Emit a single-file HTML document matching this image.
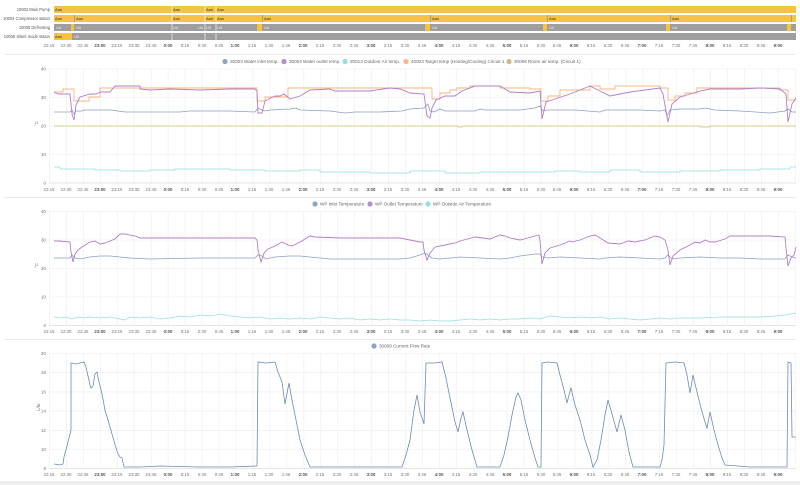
<!DOCTYPE html>
<html><head><meta charset="utf-8"><style>
html,body{margin:0;padding:0;background:#fff;width:800px;height:485px;overflow:hidden}
svg{display:block;font-family:"Liberation Sans",sans-serif}
.ax text{font-size:4.4px;fill:#777;text-anchor:middle}
.ax .b{font-weight:bold;fill:#555}
.yl{font-size:4.6px;fill:#777;text-anchor:end}
.lg{font-size:4.6px;fill:#666}
.rl{font-size:4.1px;fill:#555;text-anchor:end}
.on{font-size:4px;fill:#333}
.off{font-size:4px;fill:#eee}
</style></head><body>
<svg width="800" height="485" viewBox="0 0 800 485">
<defs>
<pattern id="vg" x="49" y="0" width="16.95" height="500" patternUnits="userSpaceOnUse"><line x1="0.5" y1="0" x2="0.5" y2="500" stroke="#ececec" stroke-width="0.6"/></pattern>
</defs>

<!-- Timeline -->
<text class="rl" x="50" y="11">10002 Main Pump</text>
<text class="rl" x="50" y="20">10004 Compressor status</text>
<text class="rl" x="50" y="29">10005 Defrosting</text>
<text class="rl" x="50" y="38">10006 Silent mode status</text>
<rect x="54" y="6" width="742" height="7" fill="#f6c244"/>
<g stroke="#fff" stroke-width="0.6"><line x1="172" y1="6" x2="172" y2="13"/><line x1="205" y1="6" x2="205" y2="13"/><line x1="216" y1="6" x2="216" y2="13"/></g>
<rect x="54" y="15" width="742" height="7" fill="#f6c244"/>
<g fill="#9e9e9e"><rect x="74" y="15" width="1" height="7"/><rect x="262" y="15" width="1" height="7"/><rect x="430" y="15" width="1" height="7"/><rect x="547" y="15" width="1" height="7"/><rect x="670" y="15" width="1" height="7"/><rect x="791" y="15" width="1" height="7"/></g>
<g stroke="#fff" stroke-width="0.6"><line x1="172" y1="15" x2="172" y2="22"/><line x1="205" y1="15" x2="205" y2="22"/><line x1="216" y1="15" x2="216" y2="22"/></g>
<rect x="54" y="24" width="742" height="7" fill="#9e9e9e"/>
<g fill="#f6c244"><rect x="71" y="24" width="3" height="7"/><rect x="257" y="24" width="5" height="7"/><rect x="425" y="24" width="5" height="7"/><rect x="543" y="24" width="4" height="7"/><rect x="666" y="24" width="4" height="7"/><rect x="787" y="24" width="4" height="7"/></g>
<g stroke="#fff" stroke-width="0.6"><line x1="172" y1="24" x2="172" y2="31"/><line x1="205" y1="24" x2="205" y2="31"/><line x1="216" y1="24" x2="216" y2="31"/></g>
<rect x="54" y="33" width="742" height="7" fill="#9e9e9e"/>
<rect x="54" y="33" width="18" height="7" fill="#f6c244"/>
<g stroke="#fff" stroke-width="0.6"><line x1="172" y1="33" x2="172" y2="40"/><line x1="205" y1="33" x2="205" y2="40"/><line x1="216" y1="33" x2="216" y2="40"/></g>
<g class="on"><text x="55" y="11">Aan</text><text x="173" y="11">Aan</text><text x="206" y="11">Aan</text><text x="217" y="11">Aan</text>
<text x="55" y="20">Aan</text><text x="76" y="20">Aan</text><text x="173" y="20">Aan</text><text x="206" y="20">Aan</text><text x="217" y="20">Aan</text><text x="264" y="20">Aan</text><text x="432" y="20">Aan</text><text x="549" y="20">Aan</text><text x="672" y="20">Aan</text>
<text x="55" y="38">Aan</text></g>
<g class="off"><text x="56" y="29">Uit</text><text x="76" y="29">Uit</text><text x="173" y="29">Uit</text><text x="198" y="29">Uit</text><text x="206" y="29">Uit</text><text x="217" y="29">Uit</text><text x="264" y="29">Uit</text><text x="432" y="29">Uit</text><text x="549" y="29">Uit</text><text x="672" y="29">Uit</text>
<text x="74" y="38">Uit</text></g>

<g class="ax" transform="translate(0,47)">
<text x="49">22:15</text><text x="66">22:30</text><text x="83">22:45</text><text class="b" x="100">23:00</text><text x="117">23:15</text><text x="134">23:30</text><text x="151">23:45</text><text class="b" x="168">0:00</text><text x="185">0:15</text><text x="202">0:30</text><text x="219">0:45</text><text class="b" x="235">1:00</text><text x="252">1:15</text><text x="269">1:30</text><text x="286">1:45</text><text class="b" x="303">2:00</text><text x="320">2:15</text><text x="337">2:30</text><text x="354">2:45</text><text class="b" x="371">3:00</text><text x="388">3:15</text><text x="405">3:30</text><text x="422">3:45</text><text class="b" x="439">4:00</text><text x="456">4:15</text><text x="473">4:30</text><text x="490">4:45</text><text class="b" x="507">5:00</text><text x="524">5:15</text><text x="541">5:30</text><text x="557">5:45</text><text class="b" x="574">6:00</text><text x="591">6:15</text><text x="608">6:30</text><text x="625">6:45</text><text class="b" x="642">7:00</text><text x="659">7:15</text><text x="676">7:30</text><text x="693">7:45</text><text class="b" x="710">8:00</text><text x="727">8:15</text><text x="744">8:30</text><text x="761">8:45</text><text class="b" x="778">9:00</text>
</g>
<line x1="4" y1="54.5" x2="796" y2="54.5" stroke="#e4e4e4" stroke-width="0.8"/>

<!-- Chart 1 -->
<g class="lg">
<circle cx="225" cy="61.5" r="2.6" fill="#8fa5c6"/><text x="230" y="63">30003 Water inlet temp.</text>
<circle cx="284" cy="61.5" r="2.6" fill="#b48fcc"/><text x="289" y="63">30004 Water outlet temp.</text>
<circle cx="345" cy="61.5" r="2.6" fill="#98dde0"/><text x="350" y="63">30013 Outdoor Air temp.</text>
<circle cx="406" cy="61.5" r="2.6" fill="#f7b98a"/><text x="411" y="63">40003 Target temp (Heating/Cooling) Circuit 1</text>
<circle cx="509" cy="61.5" r="2.6" fill="#cfbb86"/><text x="514" y="63">30008 Room air temp. (Circuit 1)</text>
</g>
<rect x="49" y="68" width="747" height="116" fill="url(#vg)"/>
<g stroke="#ececec" stroke-width="0.6"><line x1="49" y1="69" x2="796" y2="69"/><line x1="49" y1="97.5" x2="796" y2="97.5"/><line x1="49" y1="126" x2="796" y2="126"/><line x1="49" y1="154.5" x2="796" y2="154.5"/><line x1="49" y1="183" x2="796" y2="183" stroke="#ccc"/></g>
<g class="yl"><text x="46" y="70.5">40</text><text x="46" y="99">30</text><text x="46" y="127.5">20</text><text x="46" y="156">10</text><text x="46" y="184.5">0</text></g>
<text x="36" y="128" font-size="4.5" fill="#777" transform="rotate(-90 36 126)">°C</text>
<polyline fill="none" stroke="#d5bd6e" stroke-width="0.8" points="54,126 458,126 458,127 462,127 462,126 700,126 700,127 710,127 710,126 796,126"/>
<polyline fill="none" stroke="#93e0e0" stroke-width="0.8" points="54,167 60,167 60,169 95,169 95,170 120,170 120,171 150,171 150,170 175,170 175,169 230,169 230,170 265,170 265,171 300,171 300,170 320,170 320,172 370,172 370,173 410,173 410,171 445,171 445,173 480,173 480,172 555,172 555,171 580,171 580,172 610,172 610,170 640,170 640,172 680,172 680,171 720,171 720,170 760,170 760,169 790,169 790,167 796,167"/>
<polyline fill="none" stroke="#8ba0c4" stroke-width="0.8" points="54,112 70,112 72,110 74,114 76,111 82,111 85,110 112,110 118,111 125,112 180,112 190,111 230,111 255,112 258,108 262,110 265,111 270,110 290,109 296,108 300,110 330,111 345,113 355,112 370,112 380,112 402,111 410,109 424,108 428,104 430,111 434,112 440,109 445,111 475,111 480,109 485,110 520,110 535,108 540,106 543,111 548,110 560,110 575,110 600,112 605,110 640,110 660,111 665,110 667,116 670,110 680,109 700,109 705,108 715,110 740,111 770,113 785,111 788,109 792,112 796,112"/>
<polyline fill="none" stroke="#f7b484" stroke-width="0.9" points="54,92 63,92 63,89 74,89 74,101 89,101 89,97 100,97 100,88 257,88 257,101 265,101 265,97 288,97 288,88 432,88 432,99 440,99 440,93 450,93 450,90 457,90 457,88 470,88 470,86 500,86 500,88 530,88 530,89 541,89 541,101 548,101 548,96 560,96 560,90 590,90 590,86 600,86 600,89 615,89 615,86 660,86 660,88 668,88 668,100 675,100 675,96 685,96 685,93 697,93 697,88 780,88 780,90 788,90 788,100 796,100"/>
<polyline fill="none" stroke="#b07fc8" stroke-width="0.9" points="54,92 58,94 70,94 72,114 74,120 76,105 80,97 90,94 96,94 100,92 110,92 115,86 140,86 140,89 150,90 170,89 200,90 230,89 255,89 257,91 258,113 262,113 265,101 275,96 280,96 284,94 290,99 300,96 310,90 330,89 335,91 370,91 390,88 400,89 410,93 424,94 427,116 430,118 432,108 436,100 445,96 455,96 462,91 475,86 500,86 505,89 510,92 530,93 540,91 542,119 546,102 555,99 570,94 580,90 590,86 600,91 610,96 630,92 645,90 660,88 663,94 668,122 672,104 680,97 690,94 700,91 710,89 740,89 760,88 780,89 786,94 788,122 792,104 796,98"/>
<g class="ax" transform="translate(0,191)">
<text x="49">22:15</text><text x="66">22:30</text><text x="83">22:45</text><text class="b" x="100">23:00</text><text x="117">23:15</text><text x="134">23:30</text><text x="151">23:45</text><text class="b" x="168">0:00</text><text x="185">0:15</text><text x="202">0:30</text><text x="219">0:45</text><text class="b" x="235">1:00</text><text x="252">1:15</text><text x="269">1:30</text><text x="286">1:45</text><text class="b" x="303">2:00</text><text x="320">2:15</text><text x="337">2:30</text><text x="354">2:45</text><text class="b" x="371">3:00</text><text x="388">3:15</text><text x="405">3:30</text><text x="422">3:45</text><text class="b" x="439">4:00</text><text x="456">4:15</text><text x="473">4:30</text><text x="490">4:45</text><text class="b" x="507">5:00</text><text x="524">5:15</text><text x="541">5:30</text><text x="557">5:45</text><text class="b" x="574">6:00</text><text x="591">6:15</text><text x="608">6:30</text><text x="625">6:45</text><text class="b" x="642">7:00</text><text x="659">7:15</text><text x="676">7:30</text><text x="693">7:45</text><text class="b" x="710">8:00</text><text x="727">8:15</text><text x="744">8:30</text><text x="761">8:45</text><text class="b" x="778">9:00</text>
</g>
<line x1="4" y1="197.5" x2="796" y2="197.5" stroke="#e4e4e4" stroke-width="0.8"/>

<!-- Chart 2 -->
<g class="lg">
<circle cx="315" cy="204" r="2.6" fill="#8fa5c6"/><text x="320" y="205.5">WP Inlet Temperature</text>
<circle cx="370" cy="204" r="2.6" fill="#b48fcc"/><text x="375" y="205.5">WP Outlet Temperature</text>
<circle cx="428" cy="204" r="2.6" fill="#98dde0"/><text x="433" y="205.5">WP Outside Air Temperature</text>
</g>
<rect x="49" y="211" width="747" height="114" fill="url(#vg)"/>
<g stroke="#ececec" stroke-width="0.6"><line x1="49" y1="211.5" x2="796" y2="211.5"/><line x1="49" y1="240" x2="796" y2="240"/><line x1="49" y1="268.5" x2="796" y2="268.5"/><line x1="49" y1="297" x2="796" y2="297"/><line x1="49" y1="325.5" x2="796" y2="325.5" stroke="#ccc"/></g>
<g class="yl"><text x="46" y="213">40</text><text x="46" y="241.5">30</text><text x="46" y="270">20</text><text x="46" y="298.5">10</text><text x="46" y="327">0</text></g>
<text x="36" y="270" font-size="4.5" fill="#777" transform="rotate(-90 36 268)">°C</text>
<polyline fill="none" stroke="#93e0e0" stroke-width="0.8" points="54,317 60,318 66,317 72,319 78,317 84,318 90,317 100,318 110,317 120,319 125,320 130,317 140,318 150,317 160,319 170,318 180,316 190,317 200,315 210,316 220,314 230,316 240,317 250,318 260,317 270,319 280,318 290,319 300,318 310,319 320,317 330,318 340,319 350,318 360,320 370,319 380,320 390,319 400,320 410,320 420,321 430,320 440,321 450,321 460,320 470,319 480,320 490,319 500,320 510,319 520,319 530,318 540,319 550,316 560,317 570,318 580,317 590,318 600,317 610,319 620,318 630,319 640,320 650,319 660,318 670,319 680,318 700,318 720,317 740,317 760,317 775,316 785,315 796,313"/>
<polyline fill="none" stroke="#8ba0c4" stroke-width="0.8" points="54,258 70,258 72,255 75,258 80,259 90,257 100,256 110,256 120,257 130,258 150,259 200,258 230,258 255,258 258,255 262,256 266,259 275,257 290,256 300,256 310,257 330,259 340,259 400,259 410,258 420,255 425,253 428,255 432,258 440,259 450,258 460,257 480,258 500,259 510,258 520,256 535,254 540,254 542,257 548,258 560,257 580,258 600,259 605,258 620,257 640,258 660,259 665,258 668,255 672,259 680,258 700,257 720,258 740,258 760,259 785,259 788,255 792,257 796,258"/>
<polyline fill="none" stroke="#b07fc8" stroke-width="0.9" points="54,241 60,241 70,242 71,252 73,262 75,254 78,250 82,247 90,242 95,241 100,244 105,243 115,239 120,234 125,234 135,236 140,238 145,238 170,238 200,238 230,238 255,238 257,240 258,250 261,262 264,253 268,249 275,246 282,242 288,245 292,246 300,242 310,236 315,237 340,238 380,238 400,238 410,240 420,242 423,242 424,250 427,260 430,253 435,247 445,245 455,243 460,241 475,237 490,239 500,235 505,236 510,238 520,240 535,236 539,235 540,241 542,264 545,253 550,248 560,245 570,241 572,242 580,240 590,236 595,235 600,238 608,243 620,244 628,241 635,242 645,240 655,236 660,237 665,240 668,250 670,265 673,256 680,250 690,245 695,242 700,243 705,240 710,242 715,242 725,239 730,236 740,236 770,236 785,237 786,248 788,266 791,258 794,255 796,247"/>
<g class="ax" transform="translate(0,333)">
<text x="49">22:15</text><text x="66">22:30</text><text x="83">22:45</text><text class="b" x="100">23:00</text><text x="117">23:15</text><text x="134">23:30</text><text x="151">23:45</text><text class="b" x="168">0:00</text><text x="185">0:15</text><text x="202">0:30</text><text x="219">0:45</text><text class="b" x="235">1:00</text><text x="252">1:15</text><text x="269">1:30</text><text x="286">1:45</text><text class="b" x="303">2:00</text><text x="320">2:15</text><text x="337">2:30</text><text x="354">2:45</text><text class="b" x="371">3:00</text><text x="388">3:15</text><text x="405">3:30</text><text x="422">3:45</text><text class="b" x="439">4:00</text><text x="456">4:15</text><text x="473">4:30</text><text x="490">4:45</text><text class="b" x="507">5:00</text><text x="524">5:15</text><text x="541">5:30</text><text x="557">5:45</text><text class="b" x="574">6:00</text><text x="591">6:15</text><text x="608">6:30</text><text x="625">6:45</text><text class="b" x="642">7:00</text><text x="659">7:15</text><text x="676">7:30</text><text x="693">7:45</text><text class="b" x="710">8:00</text><text x="727">8:15</text><text x="744">8:30</text><text x="761">8:45</text><text class="b" x="778">9:00</text>
</g>
<line x1="4" y1="339.5" x2="796" y2="339.5" stroke="#e4e4e4" stroke-width="0.8"/>

<!-- Chart 3 -->
<g class="lg">
<circle cx="374" cy="346" r="2.6" fill="#8fa5c6"/><text x="379" y="347.5">30009 Current Flow Rate</text>
</g>
<rect x="49" y="353" width="747" height="115" fill="url(#vg)"/>
<g stroke="#ececec" stroke-width="0.6"><line x1="49" y1="353.5" x2="796" y2="353.5"/><line x1="49" y1="372.7" x2="796" y2="372.7"/><line x1="49" y1="391.9" x2="796" y2="391.9"/><line x1="49" y1="411.1" x2="796" y2="411.1"/><line x1="49" y1="430.3" x2="796" y2="430.3"/><line x1="49" y1="449.5" x2="796" y2="449.5"/><line x1="49" y1="468.5" x2="796" y2="468.5" stroke="#ccc"/></g>
<g class="yl"><text x="46" y="355">20</text><text x="46" y="374">18</text><text x="46" y="393.5">16</text><text x="46" y="412.5">14</text><text x="46" y="432">12</text><text x="46" y="451">10</text><text x="46" y="470">8</text></g>
<text x="38" y="413" font-size="4.5" fill="#777" transform="rotate(-90 38 411)">L/hr</text>
<polyline fill="none" stroke="#6f8ab4" stroke-width="0.8" points="54,464 60,465 63,464 64,457 67,446 70,434 71,430 71,363 76,364 80,363 84,362 86,367 88,376 90,385 91,388 93,386 95,374 97,372 99,382 102,394 105,410 108,420 112,434 116,448 118,454 120,457 122,458 124,467 140,467 160,466 200,467 230,467 257,466 258,362 266,363 275,362 278,372 282,382 285,404 289,383 292,400 296,420 300,440 305,455 310,467 340,467 370,467 400,467 402,467 406,455 410,440 414,410 417,395 420,412 424,424 426,363 435,363 442,362 446,378 450,398 455,422 458,432 461,418 463,412 467,430 472,450 477,467 500,467 504,455 508,437 512,415 516,397 518,393 521,400 525,420 530,440 535,458 538,467 541,467 542,363 548,362 557,363 560,375 564,390 567,403 569,395 571,388 575,405 580,420 585,440 590,455 593,467 597,460 601,440 605,415 608,400 612,414 617,432 621,415 625,430 629,452 633,467 645,467 660,467 662,460 664,445 666,363 675,362 684,363 687,375 690,393 693,375 697,392 701,408 705,422 707,428 710,412 714,430 718,445 722,458 725,465 750,467 787,467 788,362 791,363 792,437 796,437"/>
<g class="ax" transform="translate(0,476)">
<text x="49">22:15</text><text x="66">22:30</text><text x="83">22:45</text><text class="b" x="100">23:00</text><text x="117">23:15</text><text x="134">23:30</text><text x="151">23:45</text><text class="b" x="168">0:00</text><text x="185">0:15</text><text x="202">0:30</text><text x="219">0:45</text><text class="b" x="235">1:00</text><text x="252">1:15</text><text x="269">1:30</text><text x="286">1:45</text><text class="b" x="303">2:00</text><text x="320">2:15</text><text x="337">2:30</text><text x="354">2:45</text><text class="b" x="371">3:00</text><text x="388">3:15</text><text x="405">3:30</text><text x="422">3:45</text><text class="b" x="439">4:00</text><text x="456">4:15</text><text x="473">4:30</text><text x="490">4:45</text><text class="b" x="507">5:00</text><text x="524">5:15</text><text x="541">5:30</text><text x="557">5:45</text><text class="b" x="574">6:00</text><text x="591">6:15</text><text x="608">6:30</text><text x="625">6:45</text><text class="b" x="642">7:00</text><text x="659">7:15</text><text x="676">7:30</text><text x="693">7:45</text><text class="b" x="710">8:00</text><text x="727">8:15</text><text x="744">8:30</text><text x="761">8:45</text><text class="b" x="778">9:00</text>
</g>
<rect x="0" y="481" width="800" height="4" fill="#eeeeee"/>
</svg>
</body></html>
